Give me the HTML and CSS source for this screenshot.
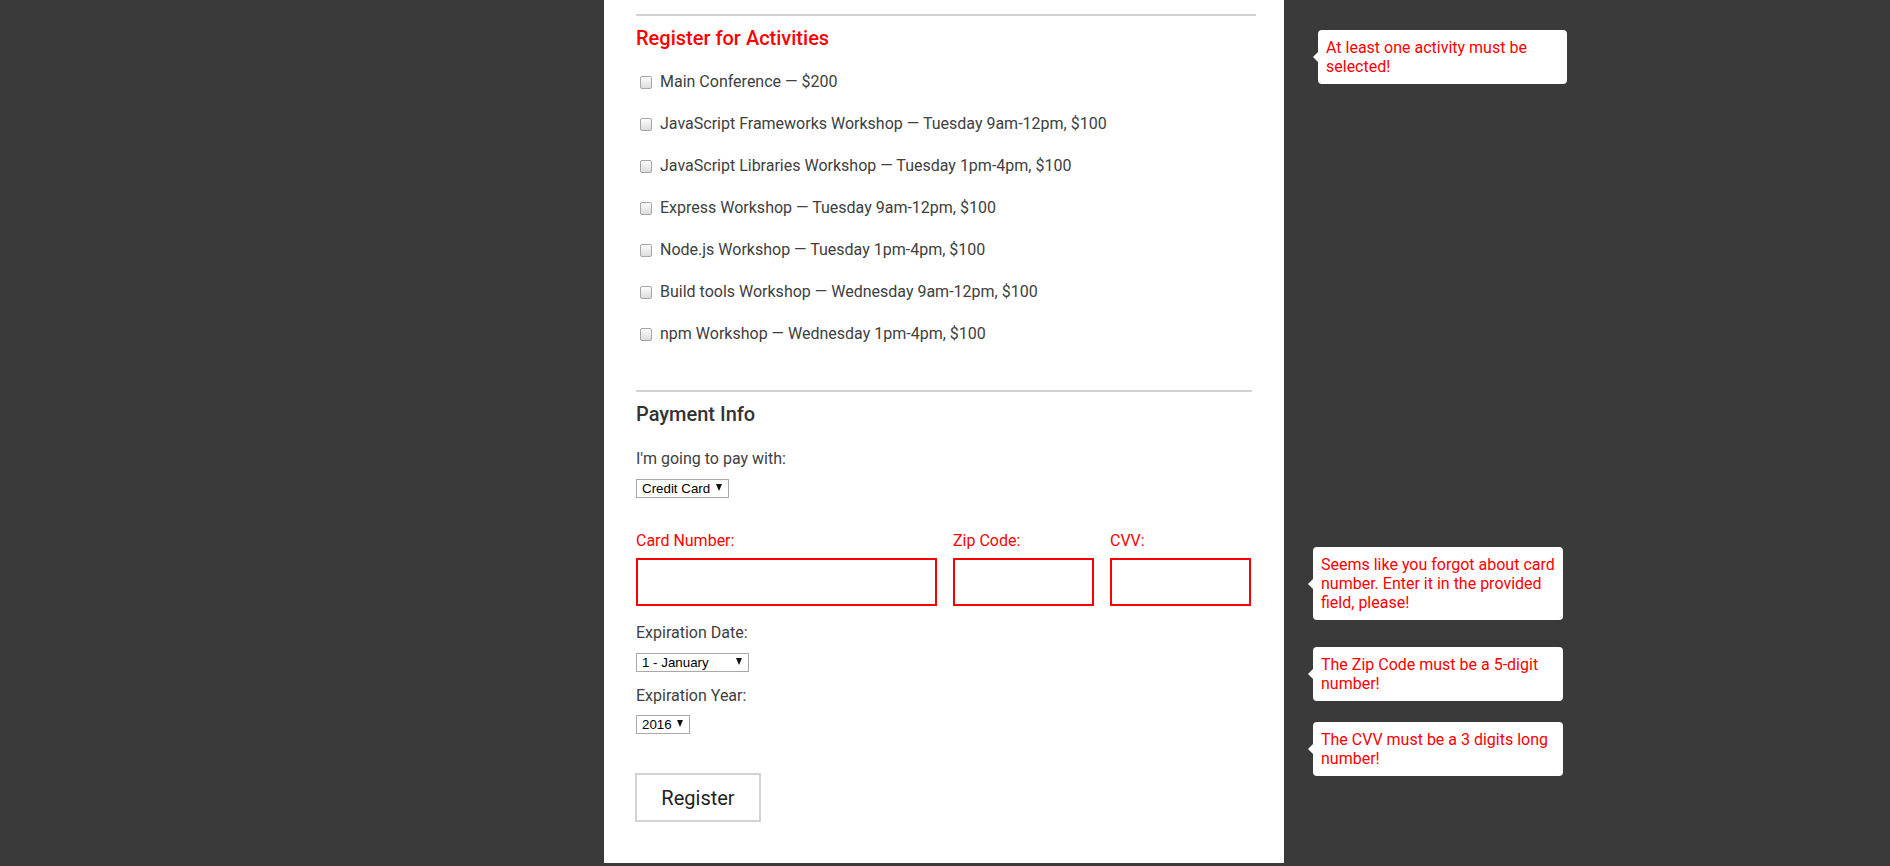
FILE: index.html
```html
<!DOCTYPE html>
<html lang="en">
<head>
<meta charset="utf-8">
<title>Register</title>
<link rel="stylesheet" href="styles.css">
</head>
<body>
<form class="card">
  <hr class="rule rule-first">
  <h2 class="title title-error">Register for Activities</h2>
  <div class="activities">
    <label class="act"><input type="checkbox" class="cb"><span>Main Conference — $200</span></label>
    <label class="act"><input type="checkbox" class="cb"><span>JavaScript Frameworks Workshop — Tuesday 9am-12pm, $100</span></label>
    <label class="act"><input type="checkbox" class="cb"><span>JavaScript Libraries Workshop — Tuesday 1pm-4pm, $100</span></label>
    <label class="act"><input type="checkbox" class="cb"><span>Express Workshop — Tuesday 9am-12pm, $100</span></label>
    <label class="act"><input type="checkbox" class="cb"><span>Node.js Workshop — Tuesday 1pm-4pm, $100</span></label>
    <label class="act"><input type="checkbox" class="cb"><span>Build tools Workshop — Wednesday 9am-12pm, $100</span></label>
    <label class="act"><input type="checkbox" class="cb"><span>npm Workshop — Wednesday 1pm-4pm, $100</span></label>
  </div>
  <hr class="rule rule-second">
  <h2 class="title">Payment Info</h2>
  <p class="lbl lbl-pay">I'm going to pay with:</p>
  <div class="sel sel-pay"><select class="select"><option>Credit Card</option></select></div>
  <div class="cc-grid">
    <label class="lbl lbl-error">Card Number:</label>
    <label class="lbl lbl-error">Zip Code:</label>
    <label class="lbl lbl-error">CVV:</label>
    <input type="text" class="field">
    <input type="text" class="field">
    <input type="text" class="field">
  </div>
  <p class="lbl lbl-exp">Expiration Date:</p>
  <div class="sel sel-month"><select class="select"><option>1 - January</option></select></div>
  <p class="lbl lbl-year">Expiration Year:</p>
  <div class="sel sel-year"><select class="select"><option>2016</option></select></div>
  <div class="actions"><button type="button" class="btn">Register</button></div>

  <div class="tip tip-act">At least one activity must be selected!</div>
  <div class="tip tip-card">Seems like you forgot about card number. Enter it in the provided field, please!</div>
  <div class="tip tip-zip">The Zip Code must be a 5-digit number!</div>
  <div class="tip tip-cvv">The CVV must be a 3 digits long number!</div>
</form>
</body>
</html>
```
FILE: styles.css
```css
html, body {
  margin: 0;
  padding: 0;
}
body {
  background: #3a3a3a;
  height: 866px;
  overflow: hidden;
  display: flex;
  justify-content: center;
  align-items: flex-start;
  padding-right: 2px;
  box-sizing: border-box;
  font-family: Roboto, "Liberation Sans", Arial, sans-serif;
}
.card {
  position: relative;
  box-sizing: border-box;
  width: 680px;
  flex: none;
  margin: 0;
  background: #fff;
  padding: 14px 28px 41px 32px;
}
.rule {
  border: none;
  height: 2px;
  background: #d2d2d2;
  margin: 0;
}
.rule-second {
  margin: 46px 4px 0 0;
}
.title {
  margin: 10px 0 0;
  font-size: 20px;
  line-height: 24px;
  font-weight: 500;
  color: #333;
}
.title-error {
  color: #ff0000;
}
.activities {
  margin-top: 22px;
  display: flex;
  flex-direction: column;
  gap: 22px;
}
.act {
  display: flex;
  align-items: center;
  height: 20px;
  font-size: 16px;
  line-height: 20px;
  color: #404040;
}
.cb {
  -webkit-appearance: none;
  appearance: none;
  box-sizing: border-box;
  width: 12px;
  height: 13px;
  margin: 1px 8px 0 4px;
  border: 1px solid #a6a6a6;
  border-radius: 2px;
  background: linear-gradient(#fcfcfc, #dcdcdc);
}
.lbl {
  margin: 0;
  font-size: 16px;
  line-height: 20px;
  color: #404040;
}
.lbl-error {
  color: #ff0000;
}
.lbl-pay {
  margin-top: 23px;
}
.lbl-exp {
  margin-top: 17px;
}
.lbl-year {
  margin-top: 15px;
}
.sel {
  position: relative;
  width: 93px;
  height: 19px;
  margin-top: 9px;
}
.sel::after {
  content: "";
  position: absolute;
  right: 7px;
  top: 6px;
  border-left: 3.5px solid transparent;
  border-right: 3.5px solid transparent;
  border-top: 7px solid #111;
  pointer-events: none;
}
.sel-month {
  width: 113px;
}
.sel-year {
  width: 54px;
  margin-top: 8px;
}
.select {
  -webkit-appearance: none;
  appearance: none;
  box-sizing: border-box;
  width: 100%;
  height: 19px;
  margin: 0;
  padding: 0 0 0 5px;
  border: 1px solid #a9a9a9;
  border-radius: 0;
  background: #fff;
  font-family: "Liberation Sans", Arial, sans-serif;
  font-size: 13.33px;
  line-height: 17px;
  color: #000;
}
.cc-grid {
  display: grid;
  grid-template-columns: 301px 141px 141px;
  column-gap: 16px;
  row-gap: 7px;
  margin-top: 34px;
}
.field {
  box-sizing: border-box;
  width: 100%;
  height: 48px;
  margin: 0;
  border: 2px solid #ff0000;
  background: #fff;
  outline: none;
}
.actions {
  margin-top: 40px;
}
.btn {
  box-sizing: border-box;
  width: 126px;
  height: 49px;
  margin: 0 0 0 -1px;
  border: 2px solid #d3d3d3;
  background: #fff;
  font-family: Roboto, "Liberation Sans", Arial, sans-serif;
  font-size: 20px;
  color: #222;
  padding: 0;
}
.tip {
  position: absolute;
  left: 709px;
  box-sizing: border-box;
  width: 250px;
  padding: 8px;
  background: #fff;
  border-radius: 4px;
  color: #ff0000;
  font-size: 16px;
  line-height: 19px;
}
.tip::before {
  content: "";
  position: absolute;
  left: -5px;
  top: 50%;
  margin-top: -5px;
  border-top: 5px solid transparent;
  border-bottom: 5px solid transparent;
  border-right: 5px solid #fff;
}
.tip-act {
  left: 714px;
  top: 30px;
  width: 249px;
}
.tip-card {
  top: 547px;
}
.tip-zip {
  top: 647px;
}
.tip-cvv {
  top: 722px;
}
```
